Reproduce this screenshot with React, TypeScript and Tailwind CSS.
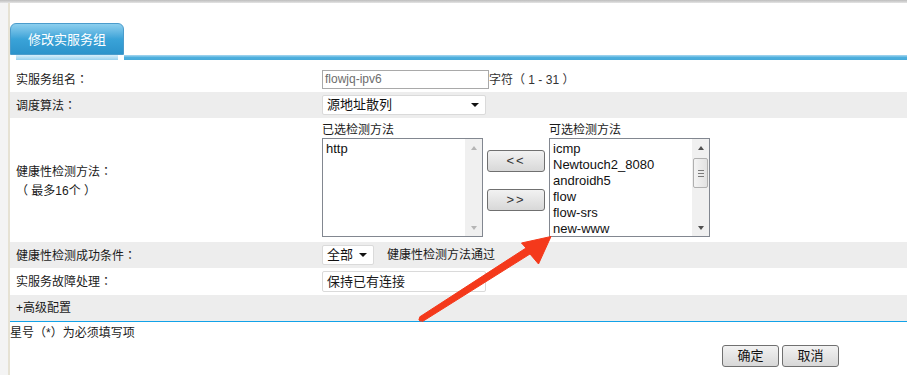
const F = "font-['Liberation_Sans','Noto_Sans_CJK_SC',sans-serif]";

// centred full-width punctuation, as the reference font draws it
const P = ({ c }: { c: string }) => (
  <span className="font-['Noto_Sans_CJK_TC','Noto_Sans_CJK_SC',sans-serif]">{c}</span>
);

const Up = ({ dark }: { dark?: boolean }) => (
  <div
    className={
      dark
        ? "h-0 w-0 border-x-[3.5px] border-b-[4px] border-x-transparent border-b-[#505050]"
        : "h-0 w-0 border-x-[3.5px] border-b-[4px] border-x-transparent border-b-[#b5b5b5]"
    }
  />
);

const Down = ({ dark }: { dark?: boolean }) => (
  <div
    className={
      dark
        ? "h-0 w-0 border-x-[3.5px] border-t-[4px] border-x-transparent border-t-[#505050]"
        : "h-0 w-0 border-x-[3.5px] border-t-[4px] border-x-transparent border-t-[#b5b5b5]"
    }
  />
);

const ScrollBar = ({ active }: { active?: boolean }) => (
  <div className="flex w-[17px] flex-col bg-[#f0f0f0]">
    <div className="flex h-[17px] items-center justify-center">
      <Up dark={active} />
    </div>
    {active && (
      <div className="mx-[1px] mt-[2px] flex h-[30px] flex-col items-center justify-center gap-[2px] rounded-[2px] border border-[#b0b0b0] bg-gradient-to-r from-[#f4f4f4] to-[#e2e2e2]">
        <div className="h-[1px] w-[6px] bg-[#7a7a7a]" />
        <div className="h-[1px] w-[6px] bg-[#7a7a7a]" />
        <div className="h-[1px] w-[6px] bg-[#7a7a7a]" />
      </div>
    )}
    <div className="flex-1" />
    <div className="flex h-[17px] items-center justify-center">
      <Down dark={active} />
    </div>
  </div>
);

const ListBox = ({ items, active }: { items: string[]; active?: boolean }) => (
  <div className="flex h-[99px] w-[161px] border border-[#828790] bg-white">
    <div className="flex-1 overflow-hidden pl-[3px] pt-[2px] text-[13px] leading-[16px] text-[#111]">
      {items.map((it) => (
        <div key={it}>{it}</div>
      ))}
    </div>
    <ScrollBar active={active} />
  </div>
);

const Btn = ({ children, w }: { children: React.ReactNode; w: string }) => (
  <div
    className={
      "flex h-[22px] items-center justify-center rounded-[3px] border border-[#707070] bg-gradient-to-b from-[#f2f2f2] to-[#d8d8d8] text-[13px] text-[#111] " +
      w
    }
  >
    {children}
  </div>
);

const Select = ({ text, w }: { text: string; w: string }) => (
  <div
    className={
      "flex h-[20px] items-center justify-between rounded-[2px] border border-[#dadada] bg-white pl-[4px] pr-[6px] text-[13px] text-[#111] " +
      w
    }
  >
    <span>{text}</span>
    <div className="h-0 w-0 border-x-[4px] border-t-[4px] border-x-transparent border-t-[#111]" />
  </div>
);

export default function App() {
  return (
    <div className={"relative h-[375px] w-[907px] overflow-hidden bg-white text-[12px] text-[#1a1a1a] " + F}>
      <div className="h-[3px] bg-gradient-to-b from-[#bdbdbd] to-[#e4e4e4]" />
      <div className="flex h-[372px]">
        <div className="w-[8px] bg-[#f4f4f4]" />
        <div className="w-[2px] bg-[#e6e2d4]" />
        <div className="flex flex-1 flex-col">
          {/* tab */}
          <div className="mt-[20px] flex items-end">
            <div className="flex w-[114px] flex-col">
              <div className="flex h-[32px] items-center justify-center rounded-t-[6px] border border-[#4b9ccc] bg-gradient-to-b from-[#8ccfee] via-[#3aa3d8] to-[#2c93cb] pt-[2px] text-[13px] text-white">
                修改实服务组
              </div>
              <div className="mx-[6px] h-[5px] bg-gradient-to-b from-[#d6eefa] to-[#9ad2ef]" />
            </div>
            <div className="h-[5px] flex-1 bg-gradient-to-b from-[#a8d8f0] via-[#4eb0de] to-[#47aad9]" />
          </div>

          {/* row 1 */}
          <div className="flex h-[32px] items-center pt-[6px]">
            <div className="w-[312px] pl-[6px]">
              实服务组名<P c="：" />
            </div>
            <div className="flex h-[19px] w-[167px] items-center border border-[#a9a9a9] pl-[2px] text-[12px] text-[#6d6d6d]">
              flowjq-ipv6
            </div>
            <span className="text-[#333]">
              字符<P c="（" /> 1 - 31 <P c="）" />
            </span>
          </div>

          {/* row 2 */}
          <div className="flex h-[26px] items-center bg-[#ededed]">
            <div className="w-[312px] pl-[6px]">
              调度算法<P c="：" />
            </div>
            <Select text="源地址散列" w="w-[164px]" />
          </div>

          {/* row 3 */}
          <div className="flex h-[124px]">
            <div className="flex w-[312px] flex-col justify-center pl-[6px] pt-[2px] leading-[17px]">
              <div>
                健康性检测方法<P c="：" />
              </div>
              <div>
                <P c="（" /> 最多16个 <P c="）" />
              </div>
            </div>
            <div className="flex pt-[5px]">
              <div className="flex flex-col">
                <div className="h-[15px] leading-[15px]">已选检测方法</div>
                <ListBox items={["http"]} />
              </div>
              <div className="ml-[4px] mt-[27px] flex flex-col gap-[17px]">
                <Btn w="w-[58px]">
                  <span className="tracking-[2px] text-[#333]">&lt;&lt;</span>
                </Btn>
                <Btn w="w-[58px]">
                  <span className="tracking-[2px] text-[#333]">&gt;&gt;</span>
                </Btn>
              </div>
              <div className="ml-[4px] flex flex-col">
                <div className="h-[15px] leading-[15px]">可选检测方法</div>
                <ListBox
                  active
                  items={["icmp", "Newtouch2_8080", "androidh5", "flow", "flow-srs", "new-www"]}
                />
              </div>
            </div>
          </div>

          {/* row 4 */}
          <div className="flex h-[26px] items-center bg-[#ededed]">
            <div className="w-[312px] pl-[6px]">
              健康性检测成功条件<P c="：" />
            </div>
            <Select text="全部" w="w-[52px]" />
            <span className="ml-[13px]">健康性检测方法通过</span>
          </div>

          {/* row 5 */}
          <div className="flex h-[27px] items-center">
            <div className="w-[312px] pl-[6px]">
              实服务故障处理<P c="：" />
            </div>
            <div className="flex h-[21px] w-[164px] items-center rounded-[2px] border border-[#dadada] pl-[4px] text-[13px]">
              保持已有连接
            </div>
          </div>

          {/* row 6 */}
          <div className="flex h-[26px] items-center bg-[#ededed] pl-[6px]">+高级配置</div>
          <div className="h-[1px] bg-[#12a2e8]" />

          <div className="h-[20px] leading-[20px]">
            星号<P c="（" />*<P c="）" />为必须填写项
          </div>

          <div className="mt-[3px] flex justify-end gap-[3px] pr-[68px]">
            <Btn w="w-[57px]">确定</Btn>
            <Btn w="w-[57px]">取消</Btn>
          </div>
        </div>
      </div>

      {/* red annotation arrow */}
      <svg className="pointer-events-none absolute left-0 top-0" width="907" height="375">
        <polygon
          points="419.5,317 526,248 521.5,243 551,236.5 538.5,264 530,254 422.5,321.5"
          fill="#f4391b"
          stroke="#f4391b"
          strokeWidth="1"
          strokeLinejoin="round"
        />
        <circle cx="421" cy="319.3" r="2.4" fill="#f4391b" />
      </svg>
    </div>
  );
}
